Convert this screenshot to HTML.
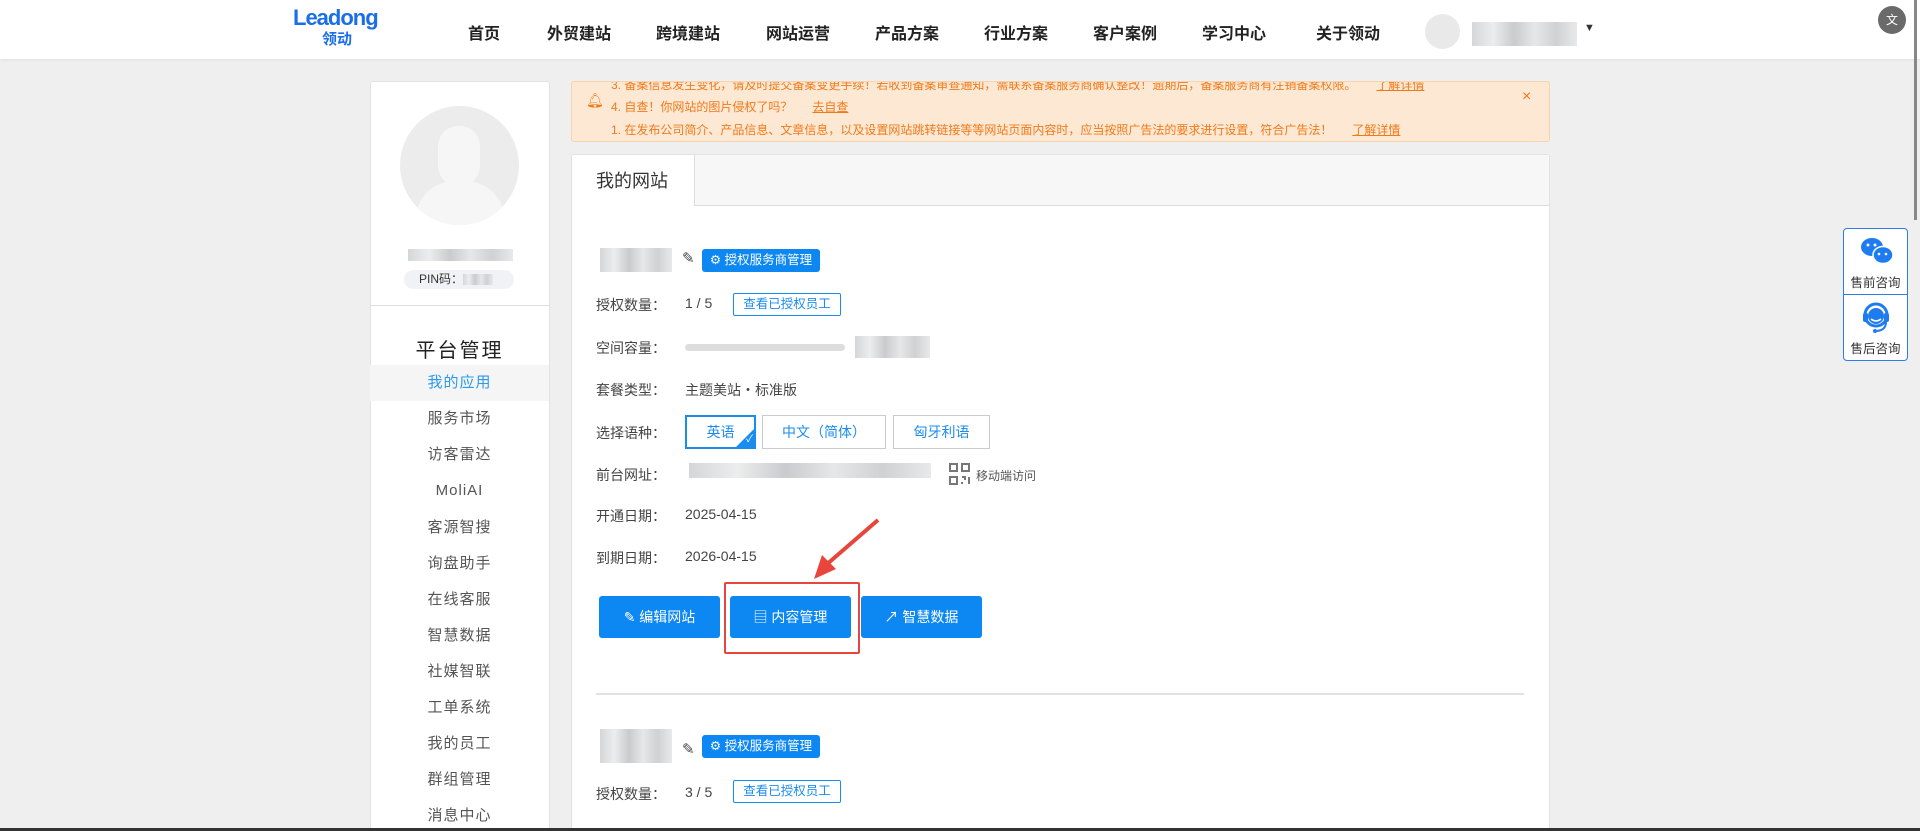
<!DOCTYPE html>
<html style="width:1920px;height:831px;overflow:hidden"><head><meta charset="utf-8"><style>
*{margin:0;padding:0;box-sizing:border-box}
body{width:1920px;height:831px;overflow:hidden;background:#efefef;font-family:"Liberation Sans","Noto Sans CJK SC",sans-serif;position:relative;color:#333}
.abs{position:absolute}
.hdr{left:0;top:0;width:1920px;height:59px;background:#fff;box-shadow:0 1px 3px rgba(0,0,0,.06)}
.nav{top:20px;font-size:16px;font-weight:bold;color:#222;transform:translateX(-50%);white-space:nowrap}
.blur{background:linear-gradient(90deg,#d4d6d9,#eceded 20%,#c9cbce 40%,#e6e7e8 60%,#cfd1d3 80%,#e8e9ea)}
.card{background:#fff;border:1px solid #e2e2e2;border-radius:3px}
.mi{left:370px;width:179px;height:36px;line-height:36px;text-align:center;font-size:15px;color:#555;letter-spacing:1px}
.lbl{left:596px;font-size:14px;color:#444}
.val{left:685px;font-size:14px;color:#444}
.bbtn{background:#0d87f2;color:#fff;border-radius:3px;font-size:13px;text-align:center}
.obtn{border:1px solid #1a8cf0;color:#1a8cf0;border-radius:2px;font-size:12.5px;text-align:center;line-height:21px;background:#fff}
.lang{top:415px;height:34px;border:1px solid #ccc;color:#1a8cf0;font-size:14px;text-align:center;line-height:32px;background:#fff}
.act{top:596px;height:42px;line-height:42px;font-size:14px;width:121px}
.nt{font-size:12px;color:#f07a1a;left:610px;white-space:nowrap}
.nt u{margin-left:20px}
</style></head><body>
<div class="abs hdr"></div>
<div class="abs" style="left:293px;top:6px;color:#1a6ee8;font-size:22px;letter-spacing:-1px;font-weight:bold;line-height:24px">Leadong</div>
<div class="abs" style="left:322px;top:28px;color:#1a6ee8;font-size:15px;font-weight:bold">领动</div>
<div class="abs nav" style="left:484px">首页</div>
<div class="abs nav" style="left:579px">外贸建站</div>
<div class="abs nav" style="left:688px">跨境建站</div>
<div class="abs nav" style="left:798px">网站运营</div>
<div class="abs nav" style="left:907px">产品方案</div>
<div class="abs nav" style="left:1016px">行业方案</div>
<div class="abs nav" style="left:1125px">客户案例</div>
<div class="abs nav" style="left:1234px">学习中心</div>
<div class="abs nav" style="left:1348px">关于领动</div>
<div class="abs" style="left:1425px;top:14px;width:35px;height:35px;border-radius:50%;background:#e9e9e9"></div>
<div class="abs blur" style="left:1472px;top:22px;width:105px;height:24px"></div>
<div class="abs" style="left:1584px;top:22px;font-size:11px;color:#333">▼</div>
<div class="abs" style="left:1878px;top:6px;width:28px;height:28px;border-radius:50%;background:#6a6a6a;color:#fff;font-size:12px;text-align:center;line-height:28px">文</div>
<div class="abs" style="left:1914px;top:0;width:3px;height:220px;background:#888"></div>

<div class="abs card" style="left:370px;top:81px;width:180px;height:760px"></div>
<div class="abs" style="left:400px;top:106px;width:119px;height:119px;border-radius:50%;background:#ececec;overflow:hidden"><div style="position:absolute;left:38px;top:20px;width:42px;height:60px;border-radius:20px;background:#f6f6f6"></div><div style="position:absolute;left:15px;top:75px;width:90px;height:60px;border-radius:40px 40px 0 0;background:#f6f6f6"></div></div>
<div class="abs blur" style="left:408px;top:249px;width:105px;height:12px"></div>
<div class="abs" style="left:404px;top:270px;width:110px;height:19px;border-radius:10px;background:#f1f2f6;font-size:12px;line-height:19px;padding-left:15px;color:#333">PIN码：<span class="blur" style="display:inline-block;width:30px;height:11px;vertical-align:middle"></span></div>
<div class="abs" style="left:370px;top:305px;width:180px;height:1px;background:#ddd"></div>
<div class="abs" style="left:370px;top:334px;width:179px;text-align:center;font-size:20px;color:#222;letter-spacing:2px">平台管理</div>
<div class="abs mi" style="top:365px;background:#f5f5f5;color:#2a9af0">我的应用</div>
<div class="abs mi" style="top:401px">服务市场</div>
<div class="abs mi" style="top:437px">访客雷达</div>
<div class="abs mi" style="top:473px">MoliAI</div>
<div class="abs mi" style="top:510px">客源智搜</div>
<div class="abs mi" style="top:546px">询盘助手</div>
<div class="abs mi" style="top:582px">在线客服</div>
<div class="abs mi" style="top:618px">智慧数据</div>
<div class="abs mi" style="top:654px">社媒智联</div>
<div class="abs mi" style="top:690px">工单系统</div>
<div class="abs mi" style="top:726px">我的员工</div>
<div class="abs mi" style="top:762px">群组管理</div>
<div class="abs mi" style="top:798px">消息中心</div>

<div class="abs" style="left:571px;top:81px;width:979px;height:61px;background:#fde8d4;border:1px solid #f9d3ac;border-radius:3px;overflow:hidden">
<div class="abs nt" style="left:39px;top:-6px">3. 备案信息发生变化，请及时提交备案变更手续！若收到备案审查通知，需联系备案服务商确认整改！逾期后，备案服务商有注销备案权限。<u>了解详情</u></div>
<div class="abs nt" style="left:39px;top:16px">4. 自查！你网站的图片侵权了吗？<u>去自查</u></div>
<div class="abs nt" style="left:39px;top:39px">1. 在发布公司简介、产品信息、文章信息，以及设置网站跳转链接等等网站页面内容时，应当按照广告法的要求进行设置，符合广告法！<u>了解详情</u></div>
<div class="abs" style="left:14px;top:10px;color:#f07a1a;font-size:14px">🔔︎</div>
<div class="abs" style="left:950px;top:6px;color:#f07a1a;font-size:16px">×</div>
</div>

<div class="abs card" style="left:571px;top:154px;width:979px;height:700px"></div>
<div class="abs" style="left:694px;top:155px;width:855px;height:51px;background:#f7f7f7;border-bottom:1px solid #ddd;border-left:1px solid #ddd"></div>
<div class="abs" style="left:596px;top:167px;font-size:18px;color:#333">我的网站</div>

<div class="abs blur" style="left:600px;top:248px;width:72px;height:24px"></div>
<div class="abs" style="left:682px;top:249px;font-size:15px;color:#444">✎</div>
<div class="abs bbtn" style="left:702px;top:249px;width:118px;height:23px;line-height:23px;font-size:12.5px">⚙ 授权服务商管理</div>
<div class="abs lbl" style="top:295px">授权数量：</div>
<div class="abs val" style="top:295px">1 / 5</div>
<div class="abs obtn" style="left:733px;top:293px;width:108px;height:23px">查看已授权员工</div>
<div class="abs lbl" style="top:338px">空间容量：</div>
<div class="abs" style="left:685px;top:344px;width:160px;height:7px;border-radius:4px;background:#ddd"></div>
<div class="abs blur" style="left:855px;top:336px;width:75px;height:22px"></div>
<div class="abs lbl" style="top:380px">套餐类型：</div>
<div class="abs val" style="top:380px">主题美站・标准版</div>
<div class="abs lbl" style="top:423px">选择语种：</div>
<div class="abs lang" style="left:685px;width:71px;border:2px solid #1a8cf0;line-height:30px;overflow:hidden">英语<div style="position:absolute;right:-1px;bottom:-1px;width:0;height:0;border-left:20px solid transparent;border-bottom:20px solid #1a8cf0"></div><span style="position:absolute;right:1px;bottom:-8px;color:#fff;font-size:10px">✓</span></div>
<div class="abs lang" style="left:762px;width:124px">中文（简体）</div>
<div class="abs lang" style="left:893px;width:97px">匈牙利语</div>
<div class="abs lbl" style="top:465px">前台网址：</div>
<div class="abs blur" style="left:689px;top:463px;width:242px;height:15px"></div>
<svg class="abs" style="left:949px;top:463px" width="21" height="22" viewBox="0 0 21 22" fill="none" stroke="#777" stroke-width="2"><rect x="1" y="1" width="7" height="7"/><rect x="13" y="1" width="7" height="7"/><rect x="1" y="14" width="7" height="7"/><path d="M13 14h3v3M20 14v7M13 19v2"/></svg>
<div class="abs" style="left:976px;top:467px;font-size:12px;color:#555">移动端访问</div>
<div class="abs lbl" style="top:506px">开通日期：</div>
<div class="abs val" style="top:506px">2025-04-15</div>
<div class="abs lbl" style="top:548px">到期日期：</div>
<div class="abs val" style="top:548px">2026-04-15</div>
<div class="abs bbtn act" style="left:599px">✎ 编辑网站</div>
<div class="abs bbtn act" style="left:730px">▤ 内容管理</div>
<div class="abs bbtn act" style="left:861px">↗ 智慧数据</div>
<div class="abs" style="left:724px;top:582px;width:136px;height:72px;border:2px solid #e8463c;border-radius:2px"></div>
<svg class="abs" style="left:800px;top:515px" width="85" height="70"><path d="M78 5 L26 50" stroke="#e8463c" stroke-width="4"/><path d="M14 64 L22 40 L36 54 Z" fill="#e8463c"/></svg>

<div class="abs" style="left:596px;top:693px;width:928px;height:2px;background:#e2e2e2"></div>
<div class="abs blur" style="left:600px;top:729px;width:72px;height:34px"></div>
<div class="abs" style="left:682px;top:740px;font-size:15px;color:#444">✎</div>
<div class="abs bbtn" style="left:702px;top:735px;width:118px;height:23px;line-height:23px;font-size:12.5px">⚙ 授权服务商管理</div>
<div class="abs lbl" style="top:784px">授权数量：</div>
<div class="abs val" style="top:784px">3 / 5</div>
<div class="abs obtn" style="left:733px;top:780px;width:108px;height:23px">查看已授权员工</div>
<div class="abs lbl" style="top:826px">空间容量：</div>

<div class="abs" style="left:1843px;top:228px;width:65px;height:133px;background:#fff;border:1px solid #2b7de9;border-radius:4px"></div>
<div class="abs" style="left:1843px;top:294px;width:65px;height:1px;background:#2b7de9"></div>
<svg class="abs" style="left:1860px;top:236px" width="34" height="30"><ellipse cx="12" cy="11" rx="11" ry="9" fill="#1f7cf0"/><ellipse cx="23" cy="19" rx="10" ry="8.5" fill="#1f7cf0" stroke="#fff" stroke-width="1.5"/><circle cx="8" cy="9" r="1.5" fill="#fff"/><circle cx="15" cy="9" r="1.5" fill="#fff"/><circle cx="19" cy="18" r="1.3" fill="#fff"/><circle cx="26" cy="18" r="1.3" fill="#fff"/></svg>
<div class="abs" style="left:1843px;top:272px;width:65px;text-align:center;font-size:12.5px;color:#333">售前咨询</div>
<svg class="abs" style="left:1860px;top:300px" width="32" height="34"><circle cx="16" cy="15" r="11" fill="none" stroke="#1f7cf0" stroke-width="3"/><circle cx="16" cy="16" r="8" fill="#1f7cf0"/><path d="M11 19 q5 4 10 0" stroke="#fff" stroke-width="1.5" fill="none"/><rect x="3" y="13" width="5" height="9" rx="2" fill="#1f7cf0"/><rect x="24" y="13" width="5" height="9" rx="2" fill="#1f7cf0"/><path d="M26 22 q0 8 -9 9" stroke="#1f7cf0" stroke-width="2" fill="none"/><circle cx="15" cy="31" r="2" fill="#1f7cf0"/></svg>
<div class="abs" style="left:1843px;top:338px;width:65px;text-align:center;font-size:12.5px;color:#333">售后咨询</div>
<div class="abs" style="left:0;top:828px;width:1920px;height:3px;background:#333"></div>
</body></html>
